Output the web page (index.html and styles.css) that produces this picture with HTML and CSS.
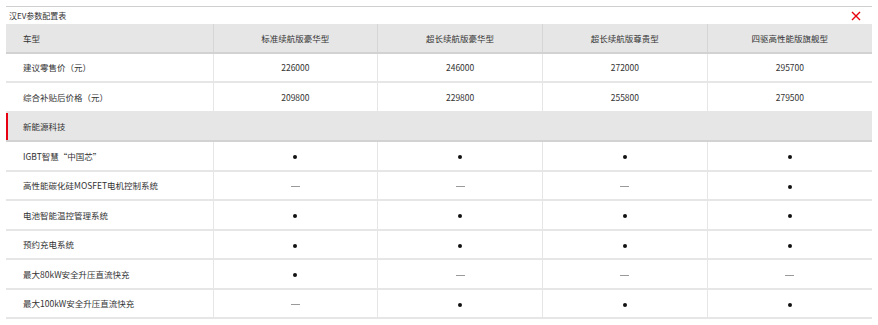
FILE: index.html
```html
<!DOCTYPE html>
<html lang="zh-CN">
<head>
    <meta charset="UTF-8">
    <title>汉EV参数配置表</title>
    <link rel="stylesheet" href="styles.css">
</head>
<body>
    <div class="panel">
        <!-- Title bar -->
        <div class="titlebar">
            <span class="title">汉EV参数配置表</span>
            <svg class="close" width="10" height="10" viewBox="0 0 10 10">
                <path d="M1 1 L9 9 M9 1 L1 9" stroke="#e60012" stroke-width="1.4" fill="none"/>
            </svg>
        </div>

        <table class="spec">
            <colgroup>
                <col class="col-name">
                <col><col><col><col>
            </colgroup>
            <tr class="head">
                <td>车型</td>
                <td>标准续航版豪华型</td>
                <td>超长续航版豪华型</td>
                <td>超长续航版尊贵型</td>
                <td>四驱高性能版旗舰型</td>
            </tr>
            <tr>
                <td>建议零售价（元）</td>
                <td>226000</td>
                <td>246000</td>
                <td>272000</td>
                <td>295700</td>
            </tr>
            <tr>
                <td>综合补贴后价格（元）</td>
                <td>209800</td>
                <td>229800</td>
                <td>255800</td>
                <td>279500</td>
            </tr>
            <tr class="section">
                <td colspan="5">新能源科技</td>
            </tr>
            <tr>
                <td>IGBT智慧“中国芯”</td>
                <td><span class="dot"></span></td>
                <td><span class="dot"></span></td>
                <td><span class="dot"></span></td>
                <td><span class="dot"></span></td>
            </tr>
            <tr>
                <td>高性能碳化硅MOSFET电机控制系统</td>
                <td><span class="dash"></span></td>
                <td><span class="dash"></span></td>
                <td><span class="dash"></span></td>
                <td><span class="dot"></span></td>
            </tr>
            <tr>
                <td>电池智能温控管理系统</td>
                <td><span class="dot"></span></td>
                <td><span class="dot"></span></td>
                <td><span class="dot"></span></td>
                <td><span class="dot"></span></td>
            </tr>
            <tr>
                <td>预约充电系统</td>
                <td><span class="dot"></span></td>
                <td><span class="dot"></span></td>
                <td><span class="dot"></span></td>
                <td><span class="dot"></span></td>
            </tr>
            <tr>
                <td>最大80kW安全升压直流快充</td>
                <td><span class="dot"></span></td>
                <td><span class="dash"></span></td>
                <td><span class="dash"></span></td>
                <td><span class="dash"></span></td>
            </tr>
            <tr>
                <td>最大100kW安全升压直流快充</td>
                <td><span class="dash"></span></td>
                <td><span class="dot"></span></td>
                <td><span class="dot"></span></td>
                <td><span class="dot"></span></td>
            </tr>
        </table>
    </div>
</body>
</html>
```

FILE: styles.css
```css
/* Basic Styles */
body {
    margin: 0;
    padding: 0;
    background-color: #ffffff;
    color: #333333;
    font-family: "Noto Sans CJK SC", "Liberation Sans", sans-serif;
}

.panel {
    padding: 6px 6px 0 6px;
}

/* Title bar */
.titlebar {
    border-top: 1px solid #cfcfcf;
    height: 17px;
    display: flex;
    align-items: center;
    justify-content: space-between;
}

.title {
    font-size: 8px;
    padding-left: 3px;
    color: #333333;
}

.close {
    margin-right: 11px;
}

/* Spec table */
.spec {
    width: 100%;
    border-collapse: collapse;
    table-layout: fixed;
    font-size: 8.5px;
}

.col-name {
    width: 207px;
}

.spec td {
    height: 27.5px;
    padding: 0;
    text-align: center;
    border-bottom: 2px solid #e6e6e6;
    border-left: 1px solid #e6e6e6;
}

.spec td:first-child {
    text-align: left;
    padding-left: 17px;
    border-left: none;
}

.head td {
    background-color: #e6e6e6;
    border-left-color: #d6d6d6;
    border-bottom-color: #d2d2d2;
}

.section td {
    background-color: #e6e6e6;
    border-bottom-color: #d2d2d2;
    box-shadow: inset 2px 0 0 #e60012;
}

/* Marks */
.dot {
    display: inline-block;
    width: 4px;
    height: 4px;
    border-radius: 50%;
    background-color: #111111;
    vertical-align: middle;
}

.dash {
    display: inline-block;
    width: 9px;
    height: 1px;
    background-color: #9a9a9a;
    vertical-align: middle;
}
```
